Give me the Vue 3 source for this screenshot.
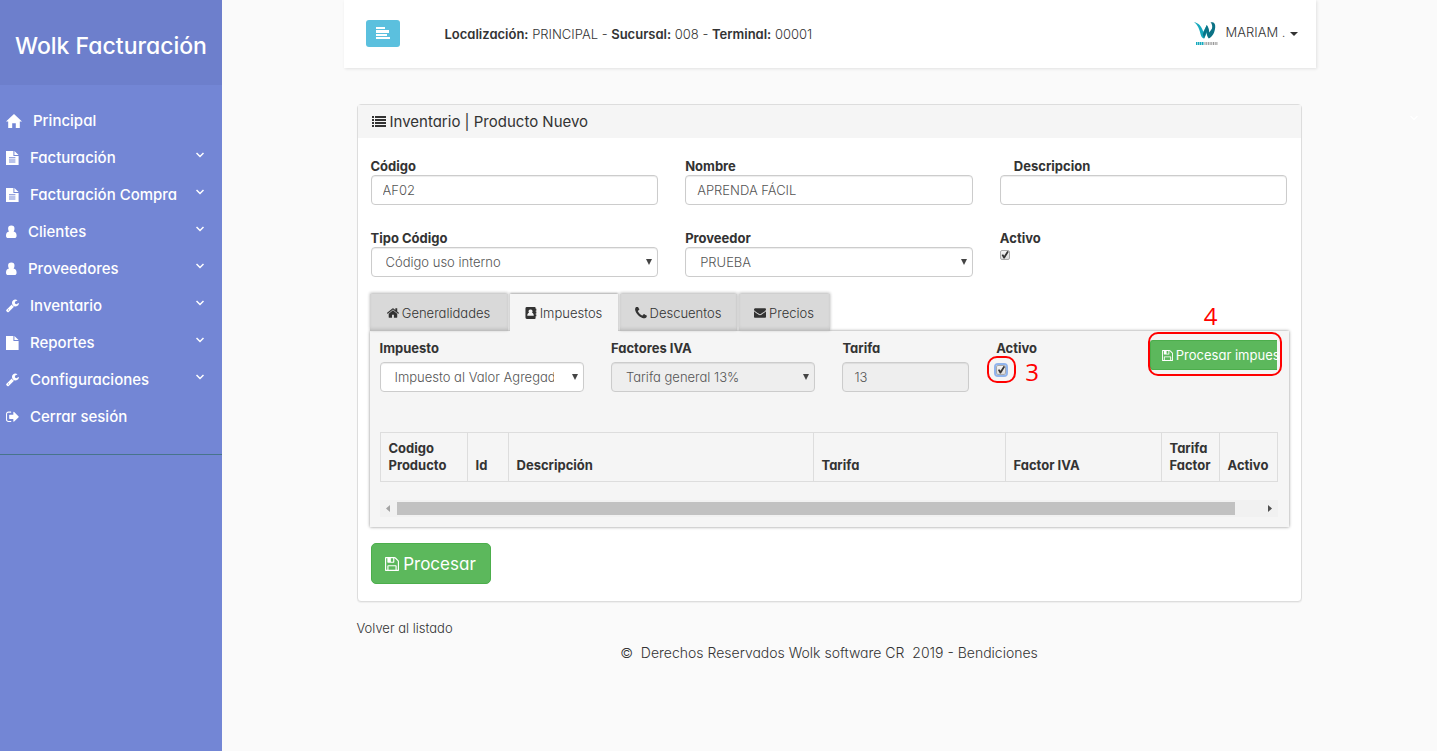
<script setup>
import { ref } from 'vue'

const menu = [
  { icon: 'home', label: 'Principal', sub: false },
  { icon: 'doc', label: 'Facturación', sub: true },
  { icon: 'doc', label: 'Facturación Compra', sub: true },
  { icon: 'user', label: 'Clientes', sub: true },
  { icon: 'user', label: 'Proveedores', sub: true },
  { icon: 'wrench', label: 'Inventario', sub: true },
  { icon: 'file', label: 'Reportes', sub: true },
  { icon: 'wrench', label: 'Configuraciones', sub: true },
  { icon: 'exit', label: 'Cerrar sesión', sub: false }
]

const paths = {
  home: { box: '0 0 16 14', w: 'w16', d: 'M8 0l8 7.6h-2.2V14H9.8V9.2H6.2V14H2.2V7.6H0L5 2.8z' },
  doc: { box: '0 0 13 14', w: 'w13', d: 'M0 0h7.4v5H12.6v9H0zM8.4 0l4.2 4H8.4zM3 6.2v1h6.4v-1zM3 8.4v1h6.4v-1zM3 10.6v1h6.4v-1z' },
  file: { box: '0 0 13 14', w: 'w13', d: 'M0 0h7.4v5H12.6v9H0zM8.4 0l4.2 4H8.4z' },
  user: { box: '0 0 11 13', w: 'w11', d: 'M5.3 0a3.2 3.2 0 0 1 3.2 3.3c0 1-.3 2-.9 2.7 1.9.2 3 1.7 3 4.2C10.6 11.8 9.7 12.5 8.4 12.5H2.2C.9 12.5 0 11.8 0 10.2 0 7.7 1.1 6.2 3 6c-.6-.7-.9-1.7-.9-2.7A3.2 3.2 0 0 1 5.300 0z' },
  wrench: { box: '60 120 1680 1680', w: 'w13', d: 'M448 1472q0-26-19-45t-45-19-45 19-19 45 19 45 45 19 45-19 19-45zm644-420l-682 682q-37 37-90 37-52 0-91-37l-106-108q-38-36-38-90 0-53 38-91l681-681q39 98 114.5 173.5t173.5 114.5zm634-435q0 39-23 106-47 134-164.5 217.5t-258.500 83.500q-185 0-316.500-131.500t-131.500-316.500 131.500-316.500 316.500-131.500q58 0 121.500 16.500t107.500 46.500q16 11 16 28t-16 28l-293 169v224l193 107q5-3 79-48.500t135.500-81 70.500-35.500q15 0 23.500 10t8.500 25z' },
  exit: { box: '60 120 1600 1600', w: 'w13', d: 'M704 1440q0 4 1 20t.5 26.500-3 23.500-10 19.500-20.500 6.500h-320q-119 0-203.500-84.500t-84.500-203.500v-704q0-119 84.500-203.500t203.500-84.500h320q13 0 22.500 9.500t9.500 22.500q0 4 1 20t.5 26.500-3 23.500-10 19.500-20.500 6.500h-320q-66 0-113 47t-47 113v704q0 66 47 113t113 47h312l11.500 1 11.500 3 8 5.500 7 9 2 13.500zm928-544q0 26-19 45l-544 544q-19 19-45 19t-45-19-19-45v-288h-448q-26 0-45-19t-19-45v-384q0-26 19-45t45-19h448v-288q0-26 19-45t45-19 45 19l544 544q19 19 19 45z' }
}

const savePath = 'M512 1536h768v-384h-768v384zm896 0h128v-896q0-14-10-38.500t-20-34.500l-281-281q-10-10-34-20t-39-10v416q0 40-28 68t-68 28h-576q-40 0-68-28t-28-68v-416h-128v1280h128v-416q0-40 28-68t68-28h832q40 0 68 28t28 68v416zm-384-928v-320q0-13-9.500-22.500t-22.500-9.500h-192q-13 0-22.500 9.500t-9.500 22.500v320q0 13 9.500 22.500t22.500 9.500h192q13 0 22.500-9.500t9.500-22.500zm640 32v928q0 40-28 68t-68 28h-1344q-40 0-68-28t-28-68v-1344q0-40 28-68t68-28h928q40 0 88 20t76 48l280 280q28 28 48 76t20 88z'

const tabs = [
  { id: 'gen', label: 'Generalidades', box: '90 200 1620 1400', d: 'M1472 992v480q0 26-19 45t-45 19h-384v-384h-256v384h-384q-26 0-45-19t-19-45v-480q0-1 .5-3t.5-3l575-474 575 474q1 2 1 6zm223-69l-62 74q-8 9-21 11h-3q-13 0-21-7l-692-577-692 577q-12 8-24 7-13-2-21-11l-62-74q-8-10-7-23.500t11-21.500l719-599q32-26 76-26t76 26l244 204v-195q0-14 9-23t23-9h192q14 0 23 9t9 23v408l219 182q10 8 11 21.500t-7 23.500z' },
  { id: 'imp', label: 'Impuestos', box: '0 0 12 13', d: 'M1.500 0h8.500q1 0 1 1v1h.8v2H11v1h.8v2H11v1h.8v2H11v2q0 1-1 1H1.500Q0 13 0 11.500v-10Q0 0 1.500 0zM5.500 2.600A2.200 2.200 0 0 0 3.900 6.300C2.700 6.600 2 7.600 2 9.500h7c0-1.900-.7-2.900-1.900-3.200A2.200 2.200 0 0 0 5.500 2.600z' },
  { id: 'des', label: 'Descuentos', box: '180 240 1440 1320', d: 'M1600 1240q0 27-10 70.500t-21 68.500q-21 50-122 106-94 51-186 51-27 0-53-3.500t-57.500-12.500-47-14.500-55.500-20.500-49-18q-98-35-175-83-127-79-264-216t-216-264q-48-77-83-175-3-9-18-49t-20.500-55.500-14.500-47-12.500-57.500-3.500-53q0-92 51-186 56-101 106-122 25-11 68.500-21t70.500-10q14 0 21 3 18 6 53 76 11 19 30 54t35 63.500 31 53.500q3 4 17.500 25t21.500 35.500 7 28.500q0 20-28.500 50t-62 55-62 53-28.500 46q0 9 5 22.500t8.500 20.500 14 24 11.500 19q76 137 174 235t235 174q2 1 19 11.500t24 14 20.500 8.500 22.500 5q18 0 46-28.500t53-62 55-62 50-28.500q14 0 28.500 7t35.500 21.500 25 17.500q25 15 53.500 31t63.500 35 54 30q70 35 76 53 3 7 3 21z' },
  { id: 'pre', label: 'Precios', box: '0 256 1792 1408', d: 'M1792 710v794q0 66-47 113t-113 47h-1472q-66 0-113-47t-47-113v-794q44 49 101 87 362 246 497 345 57 42 92.500 65.500t94.500 48 110 24.500h2q51 0 110-24.500t94.500-48 92.500-65.500q170-123 498-345 57-39 100-87zm0-294q0 79-49 151t-122 123q-376 261-468 325-10 7-42.500 31t-54 38.500-52 32.500-57.500 27-50 9h-2q-23 0-50-9t-57.500-27-52-32.500-54-38.500-42.500-31q-91-64-262-182.500t-205-142.500q-62-42-117-115.500t-55-136.500q0-78 41.500-130t118.500-52h1472q65 0 112.500 47t47.500 113z' }
]
const active = ref('imp')

const codigo = ref('AF02')
const nombre = ref('APRENDA FÁCIL')
const descripcion = ref('')
const activo = ref(true)
const tarifa = ref('13')
const impActivo = ref(true)
</script>

<template>
  <div class="layout">
    <nav class="sidebar">
      <div class="brand"><h3>Wolk Facturación</h3></div>
      <ul class="menu">
        <li v-for="m in menu" :key="m.label">
          <a href="#">
            <svg :class="['mi', paths[m.icon].w]" :viewBox="paths[m.icon].box"><path fill-rule="evenodd" :d="paths[m.icon].d" /></svg>
            <span>{{ m.label }}</span>
            <svg v-if="m.sub" class="chev" viewBox="0 0 8 6"><path d="M0.500 1l3.500 3.500L7.500 1" /></svg>
          </a>
        </li>
      </ul>
    </nav>

    <div class="main">
      <div class="wrap">
        <header class="topbar">
          <button class="toggle" type="button" aria-label="Menú">
            <svg viewBox="0 0 14 12"><path d="M0 0h9v2H0zM0 3h13v3H0zM0 7h11v2H0zM0 10h14v2H0z" /></svg>
          </button>
          <p class="loc"><b>Localización:</b> PRINCIPAL - <b>Sucursal:</b> 008 - <b>Terminal:</b> 00001</p>
          <a class="profile" href="#">
            <svg class="logo" viewBox="0 0 25 24">
              <path fill="#17a9bd" d="M0 0c4.500 1 7.500 4 9.300 9.800L12.800 3l1.700 4.500-4.300 9C8.700 16.300 7.500 15.400 6.800 13 5.500 7.500 4 3 0 0z" />
              <path fill="#0b7285" d="M12.800 3c1.400 1.800 2.200 4 2.500 7.500L18 6.500C18.600 4 18 2 16.500.3 20.500 0 21.500 2 21.200 5.500c-.4 5-2.700 9-6.400 11C13 14.500 12.800 12.500 12.600 9.500L10 16.400 8.800 12z" />
              <path fill="none" stroke="#17a9bd" stroke-width="3" stroke-dasharray="1.500 .5" d="M2 21.500h8" />
              <path fill="none" stroke="#999" stroke-width="3" stroke-dasharray="1 .7" d="M10.500 21.500H24" />
            </svg>
            <span>MARIAM .</span>
            <svg class="caret" viewBox="0 0 8 4"><path d="M0 0h8L4 4z" /></svg>
          </a>
        </header>

        <main class="content">
          <section class="panel">
            <h1 class="heading">
              <svg viewBox="0 0 14 11"><path d="M0 0h2v2H0zM3 0h11v2H3zM0 3h2v2H0zM3 3h11v2H3zM0 6h2v2H0zM3 6h11v2H3zM0 9h2v2H0zM3 9h11v2H3z" /></svg>
              Inventario | Producto Nuevo
            </h1>
            <form class="body" @submit.prevent>
              <div class="fields">
                <div class="field"><label for="codigo">Código</label><input id="codigo" v-model="codigo" class="ctl" type="text" /></div>
                <div class="field"><label for="nombre">Nombre</label><input id="nombre" v-model="nombre" class="ctl" type="text" /></div>
                <div class="field"><label for="desc" class="indent">Descripcion</label><input id="desc" v-model="descripcion" class="ctl" type="text" /></div>
                <div class="field">
                  <label for="tipo">Tipo Código</label>
                  <div class="sel"><select id="tipo" class="ctl"><option>Código uso interno</option></select><svg viewBox="0 0 6 6"><path d="M0 0h6L3 6z" /></svg></div>
                </div>
                <div class="field">
                  <label for="prov">Proveedor</label>
                  <div class="sel"><select id="prov" class="ctl"><option>PRUEBA</option></select><svg viewBox="0 0 6 6"><path d="M0 0h6L3 6z" /></svg></div>
                </div>
                <div class="field"><label for="act">Activo</label><input id="act" v-model="activo" class="check" type="checkbox" /></div>
              </div>

              <div class="tabs" role="tablist">
                <button v-for="t in tabs" :key="t.id" type="button" role="tab" :aria-selected="active === t.id" :class="['tab', t.id, { on: active === t.id }]" @click="active = t.id">
                  <svg :viewBox="t.box"><path fill-rule="evenodd" :d="t.d" /></svg>{{ t.label }}
                </button>
              </div>

              <div class="pane">
                <div class="taxes">
                  <div class="field">
                    <label for="imp">Impuesto</label>
                    <div class="sel"><select id="imp" class="ctl"><option>Impuesto al Valor Agregado</option></select><svg viewBox="0 0 6 6"><path d="M0 0h6L3 6z" /></svg></div>
                  </div>
                  <div class="field">
                    <label for="fac">Factores IVA</label>
                    <div class="sel"><select id="fac" class="ctl" disabled><option>Tarifa general 13%</option></select><svg viewBox="0 0 6 6"><path d="M0 0h6L3 6z" /></svg></div>
                  </div>
                  <div class="field"><label for="tar">Tarifa</label><input id="tar" v-model="tarifa" class="ctl" type="text" disabled /></div>
                  <div class="field marked">
                    <label for="impact">Activo</label>
                    <input id="impact" v-model="impActivo" class="check focus" type="checkbox" />
                    <span class="ring ring3"></span><span class="num num3">3</span>
                  </div>
                  <div class="marked">
                    <button class="proc" type="button"><svg viewBox="128 128 1536 1536"><path fill-rule="evenodd" :d="savePath" /></svg>Procesar impues</button>
                    <span class="ring ring4"></span><span class="num num4">4</span>
                  </div>
                </div>

                <table class="grid">
                  <colgroup><col class="c1" /><col class="c2" /><col class="c3" /><col class="c4" /><col class="c5" /><col class="c6" /><col class="c6" /></colgroup>
                  <thead>
                    <tr><th>Codigo Producto</th><th>Id</th><th>Descripción</th><th>Tarifa</th><th>Factor IVA</th><th>Tarifa Factor</th><th>Activo</th></tr>
                  </thead>
                </table>

                <div class="scroll">
                  <svg class="dim" viewBox="0 0 17 17"><path d="M10 5v7L6 8.500z" /></svg>
                  <div class="track"><div class="thumb"></div></div>
                  <svg viewBox="0 0 17 17"><path d="M7 5v7l4-3.500z" /></svg>
                </div>
              </div>

              <button class="submit" type="submit"><svg viewBox="128 128 1536 1536"><path fill-rule="evenodd" :d="savePath" /></svg>Procesar</button>
            </form>
          </section>
          <a class="back" href="#">Volver al listado</a>
          <footer>© &nbsp;Derechos Reservados Wolk software CR &nbsp;2019 - Bendiciones</footer>
        </main>
      </div>
      <svg class="ghost" viewBox="0 0 8 6"><path d="M0.500 1l3.500 3.500L7.500 1" /></svg>
    </div>
  </div>
</template>

<style>
body { background: #fafafa; }
</style>

<style scoped>
* { box-sizing: border-box; }
.layout { display: flex; min-height: 100vh; font: 300 13px/18px Inter, "Open Sans", sans-serif; font-feature-settings: "cv11"; color: #333; }
button, input, select { font: inherit; font-feature-settings: inherit; color: inherit; margin: 0; }
svg { fill: currentColor; flex: none; }
a { color: inherit; text-decoration: none; }

.sidebar { width: 222px; flex: none; background: #7386d5; color: #fff; }
.brand { height: 85px; display: flex; align-items: center; padding: 6px 15px 0; background: #6d7fcc; }
.brand h3 { margin: 0; font-size: 23px; line-height: 26px; font-weight: 500; white-space: nowrap; }
.menu { list-style: none; margin: 0; padding: 17px 0 19px; border-bottom: 1px solid #47748b; }
.menu a { display: flex; align-items: center; height: 37px; padding: 0 18px 0 6px; font-size: 15px; font-weight: 500; }
.mi { height: 14px; margin-right: 11px; }
.w16 { width: 16px; }
.w13 { width: 13px; }
.w11 { width: 11px; }
.chev { width: 8px; height: 6px; margin: 0 0 6px auto; }
.chev path, .ghost path { fill: none; stroke: #fff; stroke-width: 1.500; }

.main { flex: 1; min-width: 0; position: relative; }
.wrap { width: 80%; margin: 0 auto; }
.ghost { position: absolute; right: 19px; top: 115px; width: 8px; height: 6px; }
.topbar { display: flex; align-items: center; height: 68px; padding: 0 18px 0 22px; background: #fff; box-shadow: 1px 1px 3px rgba(0, 0, 0, .1); }
.toggle { width: 34px; height: 27px; margin-bottom: 2px; padding: 0; border: 0; border-radius: 3px; background: #5bc0de; color: #fff; }
.toggle svg { width: 14px; height: 12px; display: block; margin: 0 auto; }
.loc { margin: 0 0 0 45px; white-space: nowrap; }
b { font-weight: 600; }
.profile { margin-left: auto; display: flex; align-items: center; white-space: nowrap; }
.profile span { margin-bottom: 4px; }
.logo { width: 25px; height: 24px; margin-right: 7px; }
.caret { width: 8px; height: 4px; margin-left: 4px; }

.content { padding: 36px 14px 0 13px; }
.panel { background: #fff; border: 1px solid #ddd; border-radius: 4px; box-shadow: 0 1px 1px rgba(0, 0, 0, .05); }
.heading { display: flex; align-items: center; gap: 4px; height: 33px; margin: 0; padding: 0 14px; background: #f5f5f5; font-size: 15px; line-height: 18px; font-weight: 400; }
.heading svg { width: 14px; height: 11px; }
.body { padding: 20px 13px 17px; }
.fields { display: grid; grid-template-columns: repeat(3, 1fr); gap: 25px 27px; }
.field { display: flex; flex-direction: column; align-items: flex-start; min-width: 0; }
.field label { font-weight: 700; line-height: 17px; white-space: nowrap; }
.indent { margin-left: 14px; }
.ctl { width: 100%; height: 30px; padding: 0 11px; border: 1px solid #ccc; border-radius: 4px; background: #fff; color: #555; box-shadow: inset 0 1px 1px rgba(0, 0, 0, .075); }
.ctl:disabled { background: #eee; opacity: 1; }
.sel { position: relative; width: 100%; color: #444; }
.sel select { display: block; appearance: none; padding: 0 29px 0 14px; }
.sel svg { position: absolute; right: 6px; top: 12px; width: 6px; height: 6px; pointer-events: none; }
.check { appearance: none; width: 10px; height: 10px; margin: 3px 0 0; border: 1px solid #aaa; border-radius: 2px; background: linear-gradient(#f4f4f4, #ddd); }
.check:checked::after { content: ''; display: block; width: 8px; height: 8px; background: #333; clip-path: polygon(10% 50%, 28% 42%, 42% 60%, 80% 0, 100% 8%, 48% 95%, 34% 95%); }
.focus { outline: 2px solid #90b4ec; }

.tabs { display: flex; gap: 2px; margin: 17px 0 0 -1px; }
.tab { display: flex; align-items: center; justify-content: center; gap: 3px; height: 37px; padding: 1px 0 0; border: 0; background: #d9d9d9; box-shadow: 0 -1px 3px rgba(0, 0, 0, .3), inset 0 -3px 4px -2px rgba(0, 0, 0, .2); white-space: nowrap; }
.tab svg { width: 12px; height: 12px; }
.tab.on { background: #f5f5f5; box-shadow: 0 -1px 2px rgba(0, 0, 0, .35); position: relative; }
.gen { width: 138px; }
.imp { width: 108px; }
.des { width: 117px; }
.pre { width: 91px; }
.pane { margin: 0 -1px; padding: 9px 11px 10px 10px; background: #f5f5f5; box-shadow: 0 0 3px rgba(0, 0, 0, .45); }
.tabs .on { z-index: 1; clip-path: inset(-3px -3px 0 -3px); }
.taxes { display: grid; grid-template-columns: 205fr 205fr 127fr 127fr 128fr; gap: 27px; }
.taxes label { margin-bottom: 5px; }
.marked { position: relative; min-width: 0; }
.ring { position: absolute; border: 2px solid #f00; border-radius: 10px; pointer-events: none; }
.ring3 { left: -9px; top: 16px; width: 29px; height: 27px; }
.ring4 { left: -2px; top: -8px; width: 134px; height: 44px; }
.num { position: absolute; color: #f00; font: 400 24px/24px "Open Sans", sans-serif; }
.num3 { left: 29px; top: 20px; }
.num4 { left: 54px; top: -36px; }
.proc { display: flex; align-items: center; gap: 3px; width: 100%; height: 30px; padding: 0 0 0 11px; border: 1px solid #4cae4c; border-right: 0; border-radius: 3px 0 0 3px; background: #5cb85c; color: #fff; font-weight: 400; white-space: nowrap; }
.proc svg { width: 11px; height: 11px; }

.grid { width: 100%; margin-top: 40px; border-collapse: collapse; table-layout: fixed; }
.grid th { height: 49px; padding: 7px 0 7px 8px; border: 1px solid #ddd; text-align: left; vertical-align: bottom; font-weight: 700; line-height: 17px; }
.c1 { width: 87px; }
.c2 { width: 41px; }
.c4 { width: 192px; }
.c5 { width: 156px; }
.c6 { width: 58px; }
.scroll { display: flex; margin-top: 18px; height: 17px; background: #f1f1f1; color: #505050; }
.scroll svg { width: 17px; height: 17px; }
.scroll .dim { color: #a3a3a3; }
.track { flex: 1; padding: 2px 0; }
.thumb { width: 97%; height: 13px; background: #c1c1c1; }
.submit { display: flex; align-items: center; justify-content: center; gap: 4px; width: 120px; height: 41px; margin-top: 16px; padding: 0; border: 1px solid #4cae4c; border-radius: 5px; background: #5cb85c; color: #fff; font-size: 17px; font-weight: 400; }
.submit svg { width: 14px; height: 14px; }
.back { display: block; margin-top: 17px; width: max-content; }
footer { margin-top: 6px; font-size: 14px; line-height: 20px; text-align: center; white-space: nowrap; }
</style>
